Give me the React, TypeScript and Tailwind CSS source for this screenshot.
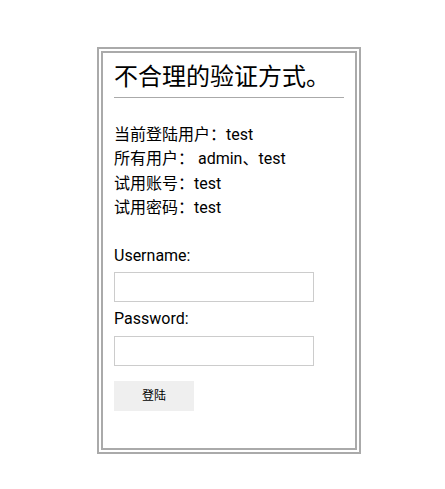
export default function App() {
  return (
    <div className="min-h-[489px] bg-white pl-[97px] pt-[47px] text-black [font-family:Roboto,'Noto_Sans_CJK_SC',sans-serif]">
      <div className="w-[264px] border-[6px] border-double border-[#aaaaaa] px-[11px] pb-[37px]">
        <h1 className="pt-[8px] pb-[4px] text-[24px] leading-[32px] border-b border-[#aaaaaa]">
          不合理的验证方式。
        </h1>
        <div className="mt-[25px] text-[16px] leading-[24.4px]">
          <p>当前登陆用户：test</p>
          <p>所有用户： admin、test</p>
          <p>试用账号：test</p>
          <p>试用密码：test</p>
        </div>
        <form className="mt-[23px] flex flex-col text-[16px]">
          <label className="leading-[24px]">Username:</label>
          <input type="text" className="mt-[4px] h-[30px] w-[200px] border border-[#cccccc] outline-none" />
          <label className="mt-[5px] leading-[24px]">Password:</label>
          <input type="password" className="mt-[5px] h-[30px] w-[200px] border border-[#cccccc] outline-none" />
          <button type="button" className="mt-[15px] h-[30px] w-[80px] bg-[#efefef] text-[12px]">
            登陆
          </button>
        </form>
      </div>
    </div>
  );
}
